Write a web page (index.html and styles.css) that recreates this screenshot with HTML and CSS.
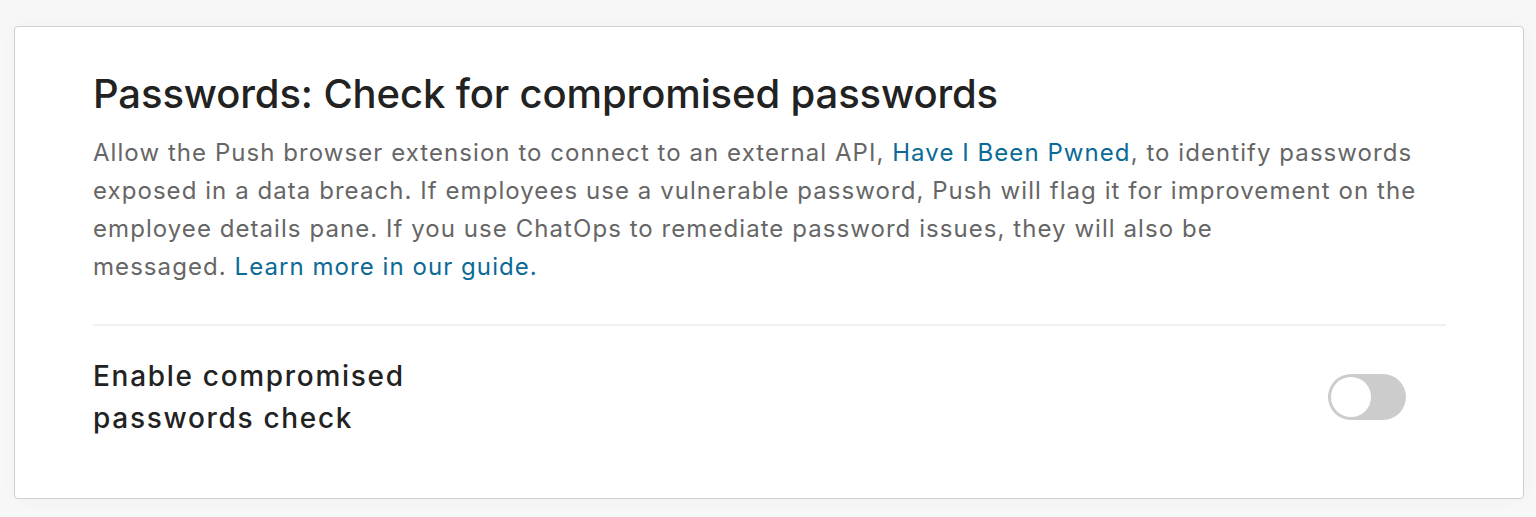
FILE: index.html
```html
<!DOCTYPE html>
<html lang="en">
<head>
<meta charset="utf-8">
<title>Passwords</title>
<link rel="stylesheet" href="styles.css">
</head>
<body>
<div class="page">
  <section class="card">
    <h2 class="title">Passwords: Check for compromised passwords</h2>
    <p class="desc">Allow the Push browser extension to connect to an external API, <a class="link" href="#">Have I Been Pwned</a>, to identify passwords<br>exposed in a data breach. If employees use a vulnerable password, Push will flag it for improvement on the<br>employee details pane. If you use ChatOps to remediate password issues, they will also be<br>messaged. <a class="link" href="#">Learn more in our guide.</a></p>
    <hr class="divider">
    <div class="setting">
      <div class="label">Enable compromised<br>passwords check</div>
      <button class="toggle" type="button" aria-pressed="false"><span class="knob"></span></button>
    </div>
  </section>
</div>
</body>
</html>
```
FILE: styles.css
```css
html, body {
  margin: 0;
  padding: 0;
}
body {
  background: #f7f7f7;
  font-family: Inter, "Noto Sans", sans-serif;
}
.page {
  padding: 26px 12px 18px 14px;
}
.card {
  background: #fff;
  border: 1px solid #cfcfcf;
  border-radius: 4px;
  padding: 41px 77px 59px 78px;
  box-shadow: 0 0 20px rgba(0,0,0,0.03);
}
.title {
  margin: 0 0 14px;
  font-size: 40px;
  line-height: 52px;
  font-weight: 500;
  color: #222;
  letter-spacing: -0.12px;
}
.desc {
  margin: 0;
  font-size: 24px;
  line-height: 38px;
  color: #666;
  letter-spacing: 1.06px;
}
.link {
  color: #0b6a96;
  text-decoration: none;
}
.divider {
  border: 0;
  border-top: 2px solid #f0f0f0;
  margin: 38px 0 0;
}
.setting {
  display: flex;
  align-items: center;
  justify-content: space-between;
  padding-top: 29px;
}
.label {
  font-size: 28px;
  line-height: 42px;
  font-weight: 500;
  color: #222;
  letter-spacing: 1.7px;
}
.toggle {
  position: relative;
  width: 78px;
  height: 46px;
  border-radius: 23px;
  background: #cccccc;
  border: 0;
  padding: 0;
  margin-right: 40px;
}
.knob {
  position: absolute;
  left: 3px;
  top: 3px;
  width: 40px;
  height: 40px;
  border-radius: 50%;
  background: #fff;
}
```
